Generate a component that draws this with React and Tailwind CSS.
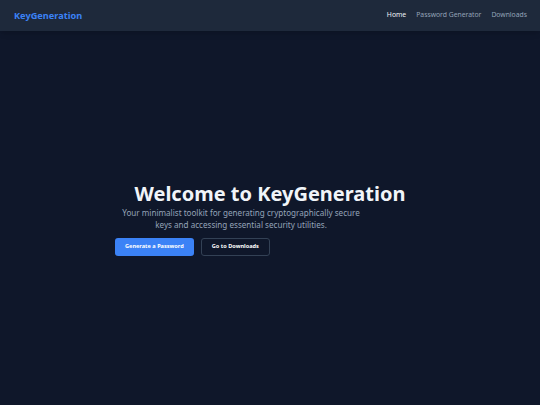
export default function App() {
  return (
    <div className="min-h-screen w-full bg-[#0f172a] flex flex-col" style={{ fontFamily: '"Noto Sans", "Open Sans", sans-serif' }}>
      <header className="h-[31px] bg-[#1e293b] flex items-center justify-between pl-[14px] pr-[13px] shadow-md">
        <span className="text-[9.2px] font-bold text-[#3b82f6]">KeyGeneration</span>
        <nav className="flex items-center gap-[10px] text-[6.8px]">
          <span className="text-[#f1f5f9]">Home</span>
          <span className="text-[#94a3b8]">Password Generator</span>
          <span className="text-[#94a3b8]">Downloads</span>
        </nav>
      </header>
      <main className="flex-1 flex items-center justify-center">
        <div className="w-[310px]">
          <h1 className="text-[20px] font-bold text-[#f1f5f9] leading-[26px] text-center">Welcome to KeyGeneration</h1>
          <p className="max-w-[252px] text-[8.1px] leading-[12px] text-[#94a3b8] text-center">
            Your minimalist toolkit for generating cryptographically secure keys and accessing essential security utilities.
          </p>
          <div className="mt-[7px] flex gap-[7px]">
            <button className="h-[18px] px-[10px] rounded-[3px] bg-[#3b82f6] text-[5.6px] font-bold text-white">Generate a Password</button>
            <button className="h-[18px] px-[10px] rounded-[3px] border border-[#334155] text-[5.6px] font-bold text-white">Go to Downloads</button>
          </div>
        </div>
      </main>
    </div>
  );
}
